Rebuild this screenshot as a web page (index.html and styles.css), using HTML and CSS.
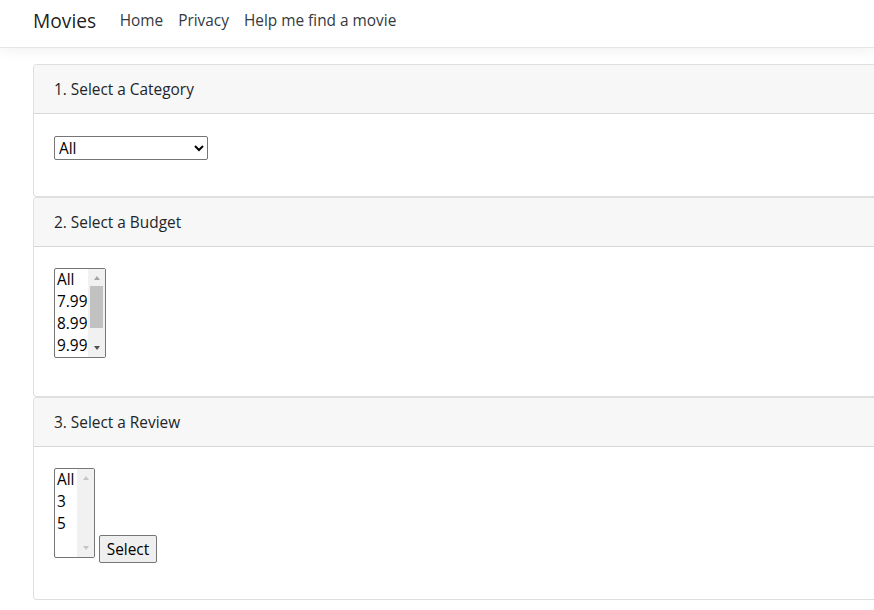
FILE: index.html
```html
<!DOCTYPE html>
<html>
<head>
<meta charset="utf-8">
<link rel="stylesheet" href="styles.css">
</head>
<body>
<header class="navbar">
  <a class="brand" href="#">Movies</a>
  <nav class="nav">
    <a class="nav-link" href="#">Home</a>
    <a class="nav-link" href="#">Privacy</a>
    <a class="nav-link" href="#">Help me find a movie</a>
  </nav>
</header>
<main class="container">
  <section class="card">
    <div class="card-header">1. Select a Category</div>
    <div class="card-body first">
      <select class="dropdown">
        <option>All</option>
      </select>
    </div>
  </section>
  <section class="card">
    <div class="card-header">2. Select a Budget</div>
    <div class="card-body">
      <div class="listbox budget" role="listbox">
        <div class="options">
          <div class="option">All</div>
          <div class="option">7.99</div>
          <div class="option">8.99</div>
          <div class="option">9.99</div>
        </div>
        <div class="scrollbar">
          <span class="arrow up"></span>
          <span class="thumb"></span>
          <span class="arrow down"></span>
        </div>
      </div>
    </div>
  </section>
  <section class="card">
    <div class="card-header">3. Select a Review</div>
    <div class="card-body row-bottom">
      <div class="listbox review" role="listbox">
        <div class="options">
          <div class="option">All</div>
          <div class="option">3</div>
          <div class="option">5</div>
        </div>
        <div class="scrollbar disabled">
          <span class="arrow up"></span>
          <span class="track-fill"></span>
          <span class="arrow down"></span>
        </div>
      </div>
      <button class="btn">Select</button>
    </div>
  </section>
</main>
</body>
</html>
```
FILE: styles.css
```css
html, body {
  margin: 0;
  padding: 0;
  overflow: hidden;
}
body {
  font-family: "Open Sans", "Noto Sans", sans-serif;
  font-size: 15.4px;
  color: #212529;
  background: #fff;
  width: 874px;
  height: 610px;
}
.navbar {
  display: flex;
  align-items: center;
  padding: 0 0 7px 33px;
  box-sizing: border-box;
  height: 48px;
  border-bottom: 1px solid #e5e5e5;
  box-shadow: 0 .25rem .75rem rgba(0,0,0,.05);
  margin-bottom: 16px;
}
.brand {
  font-size: 19.2px;
  color: rgba(0,0,0,.9);
  text-decoration: none;
  margin-right: 16px;
}
.nav {
  display: flex;
}
.nav-link {
  color: #343a40;
  text-decoration: none;
  padding: 0 7.5px;
}
.container {
  padding-left: 33px;
  width: 900px;
}
.card {
  border: 1px solid rgba(0,0,0,.125);
  border-radius: 4px;
  background: #fff;
}
.card-header {
  padding: 13px 20px 11px;
  line-height: 24px;
  background: #f7f7f7;
  border-bottom: 1px solid rgba(0,0,0,.125);
  border-radius: 3px 3px 0 0;
}
.card-body {
  padding: 21px 20px 38px;
}
.card-body.first {
  padding: 22px 20px 36px;
}
.row-bottom {
  display: flex;
  align-items: flex-end;
  gap: 4px;
  padding-bottom: 41px;
}
.dropdown {
  font-family: inherit;
  font-size: 15.4px;
  width: 154px;
  height: 24px;
  display: block;
  color: #000;
  border: 1px solid #767676;
  border-radius: 2px;
  background: #fff;
}
.listbox {
  display: flex;
  box-sizing: border-box;
  height: 90px;
  border: 1px solid #767676;
  border-radius: 2px;
  overflow: hidden;
  color: #000;
  background: #fff;
}
.budget { width: 52px; }
.review { width: 41px; }
.options {
  flex: 1;
  padding-left: 2px;
}
.option {
  line-height: 22px;
  height: 22px;
}
.scrollbar {
  width: 17px;
  background: #f1f1f1;
  display: flex;
  flex-direction: column;
  align-items: center;
}
.arrow {
  width: 0;
  height: 0;
  border-left: 3.5px solid transparent;
  border-right: 3.5px solid transparent;
}
.arrow.up {
  border-bottom: 4px solid #a3a3a3;
  margin: 7px 0 6px;
}
.arrow.down {
  border-top: 4px solid #505050;
  margin: 6px 0 7px;
}
.scrollbar.disabled .arrow.up { border-bottom-color: #c6c6c6; }
.scrollbar.disabled .arrow.down { border-top-color: #c6c6c6; }
.thumb {
  width: 13px;
  height: 42px;
  background: #c1c1c1;
}
.track-fill {
  flex: 1;
}
.thumb + .arrow.down {
  margin-top: auto;
}
.btn {
  font-family: inherit;
  font-size: 15.4px;
  color: #000;
  height: 28px;
  width: 58px;
  padding: 0;
  margin-bottom: -5px;
  background: #efefef;
  border: 1px solid #767676;
  border-radius: 2px;
}
```
